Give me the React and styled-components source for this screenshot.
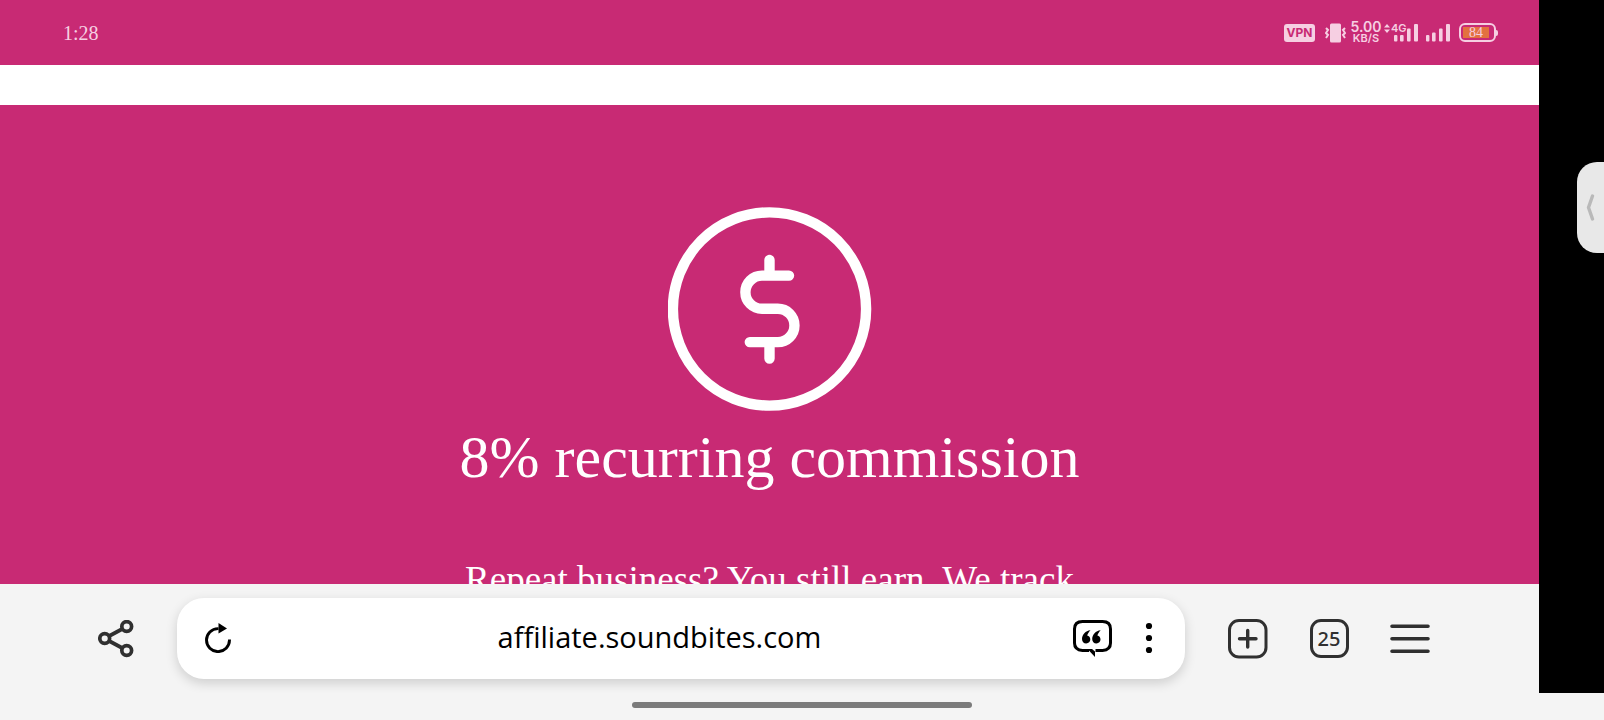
import React from "react";
import styled, { createGlobalStyle } from "styled-components";

const GlobalStyle = createGlobalStyle`
  *, *::before, *::after { box-sizing: border-box; }
  body {
    margin: 0;
    background: #f4f4f4;
    font-family: "Noto Sans", "Liberation Sans", sans-serif;
  }
  svg { display: block; }
`;

const PINK = "#c82a74";
const TINT = "#f6cfe2";
const INK = "#303030";
const SERIF = '"Liberation Serif", serif';

const Screen = styled.div`
  display: flex;
  flex-direction: column;
  height: 100vh;
  overflow: hidden;
`;

const Stage = styled.div`
  display: flex;
  flex: 1;
  min-height: 0;
`;

const Browser = styled.div`
  display: flex;
  flex-direction: column;
  flex: 1;
  min-width: 0;
`;

const StatusBar = styled.header`
  display: flex;
  align-items: center;
  justify-content: space-between;
  height: 65px;
  padding: 0 41px 0 63px;
  background: ${PINK};
  color: ${TINT};
`;

const Clock = styled.time`
  font: 20px/24px ${SERIF};
`;

const StatusIcons = styled.div`
  display: flex;
  align-items: center;
`;

const VpnBadge = styled.span`
  width: 31px;
  margin-right: 10px;
  border-radius: 3px;
  background: ${TINT};
  color: ${PINK};
  font: 700 12px/18px Inter, sans-serif;
  text-align: center;
`;

const Speed = styled.div`
  display: flex;
  flex-direction: column;
  align-items: center;
  width: 32px;
  margin: 0 2px 0 4px;
  font: 600 11px/11px Inter, sans-serif;
`;

const SpeedValue = styled.span`
  font-size: 14px;
  line-height: 12px;
`;

const Network = styled.div`
  position: relative;
  margin-right: 8px;
`;

const NetworkLabel = styled.span`
  position: absolute;
  top: -2px;
  left: 7px;
  font: 600 11px/12px Inter, sans-serif;
`;

const Battery = styled.div`
  display: flex;
  align-items: center;
  margin-left: 9px;
`;

const BatteryBody = styled.div`
  width: 37px;
  padding: 2px;
  border: 2px solid ${TINT};
  border-radius: 6px;
`;

const BatteryLevel = styled.div`
  width: 26px;
  background: #e3713f;
  font: 14px/11px ${SERIF};
  text-align: center;
`;

const BatteryTip = styled.div`
  width: 2px;
  height: 6px;
  background: ${TINT};
  border-radius: 0 2px 2px 0;
`;

const Page = styled.main`
  display: flex;
  flex-direction: column;
  flex: 1;
  min-height: 0;
  padding-top: 40px;
  background: #fff;
`;

const Feature = styled.section`
  display: flex;
  flex-direction: column;
  align-items: center;
  flex: 1;
  min-height: 0;
  padding-top: 102px;
  overflow: hidden;
  background: ${PINK};
  color: #fff;
  font-family: ${SERIF};
  text-align: center;

  > svg { flex: none; }
`;

const Title = styled.h2`
  margin: 10px 0 0;
  font-size: 60px;
  font-weight: 400;
  line-height: 72px;
`;

const Copy = styled.p`
  margin: 65px 0 0;
  font-size: 37px;
  line-height: 44px;
`;

const Toolbar = styled.nav`
  display: flex;
  align-items: center;
  height: 109px;
  padding: 0 109px 0 98px;
  background: #f4f4f4;
  color: ${INK};
`;

const AddressBar = styled.form`
  display: flex;
  align-items: center;
  flex: 1;
  min-width: 0;
  height: 81px;
  margin: 0 43px;
  padding: 0 28px 2px 26px;
  border-radius: 27px;
  background: #fff;
  color: #000;
  box-shadow: 0 4px 12px rgba(0, 0, 0, 0.16);
`;

const Address = styled.input`
  flex: 1;
  min-width: 0;
  height: 44px;
  padding: 0 0 2px 14px;
  border: 0;
  outline: 0;
  background: none;
  color: inherit;
  font: 29px/42px "Open Sans", "Noto Sans", sans-serif;
  text-align: center;
`;

const IconButton = styled.button`
  display: flex;
  align-items: center;
  justify-content: center;
  flex: none;
  width: ${(p) => p.$width || 40}px;
  height: 40px;
  padding: 0;
  border: 0;
  background: none;
  color: inherit;
`;

const Tools = styled.div`
  display: flex;
  gap: 41px;
`;

const AddressTools = styled.div`
  display: flex;
  gap: 29px;
`;

const TabCount = styled.span`
  width: 39px;
  height: 39px;
  border: 3px solid ${INK};
  border-radius: 11px;
  font: 500 20px/33px "Noto Sans", sans-serif;
  text-align: center;
`;

const Gutter = styled.aside`
  width: 65px;
  padding-top: 162px;
  background: #000;
`;

const EdgeHandle = styled.button`
  display: flex;
  align-items: center;
  width: 27px;
  height: 91px;
  margin-left: auto;
  padding: 0 0 0 9px;
  border: 0;
  border-radius: 20px 0 0 20px;
  background: #e8e8e8;
`;

const GestureBar = styled.footer`
  display: flex;
  justify-content: center;
  height: 27px;
  padding-top: 9px;
  background: #f4f4f4;
`;

const GesturePill = styled.div`
  width: 340px;
  height: 6px;
  border-radius: 3px;
  background: #7b7b7b;
`;

const VibrateIcon = () => (
  <svg width="21" height="20" viewBox="0 0 21 20" fill="none" stroke={TINT} strokeWidth="2">
    <rect x="5" y="0.5" width="11" height="19" rx="1.5" fill={TINT} stroke="none" />
    <path d="M1 5l2 2-2 3 2 2-2 3M20 5l-2 2 2 3-2 2 2 3" />
  </svg>
);

const SignalIcon = () => (
  <svg width="24" height="18" viewBox="0 0 24 18" fill={TINT}>
    <rect x="0" y="11" width="3.4" height="6.5" rx="1" />
    <rect x="6" y="8.500" width="3.6" height="9" rx="1" />
    <rect x="13" y="4.500" width="3.6" height="13" rx="1" />
    <rect x="20" y="0" width="4" height="17.500" rx="1" />
  </svg>
);

const NetworkSignalIcon = () => (
  <svg width="34" height="18" viewBox="0 0 34 18" fill={TINT}>
    <path d="M0 3.500l3-3.500 3 3.500zM0 5.500h6l-3 3.500z" />
    <rect x="10" y="11" width="3.4" height="6.5" rx="1" />
    <rect x="16" y="11" width="3.6" height="6.5" rx="1" />
    <rect x="23" y="4.500" width="3.6" height="13" rx="1" />
    <rect x="30" y="0" width="4" height="17.500" rx="1" />
  </svg>
);

const DollarIcon = () => (
  <svg width="204" height="204" viewBox="0 0 204 204" fill="none" stroke="#fff" strokeWidth="10.4" strokeLinecap="round">
    <circle cx="101.5" cy="102" r="96.6" />
    <path d="M101.500 53v12M101.500 139v12.500M121 68.600H94a16.600 16.600 0 0 0 0 33.200h15.800a16.600 16.600 0 0 1 0 33.300H81.800" />
  </svg>
);

const ShareIcon = () => (
  <svg width="36" height="38" viewBox="0 0 36 38" fill="none" stroke="currentColor" strokeWidth="3.700">
    <circle cx="6.700" cy="18.500" r="4.900" />
    <circle cx="28.700" cy="6.500" r="4.900" />
    <circle cx="28.700" cy="30.500" r="4.900" />
    <path d="M11.200 16l13-7M11.200 21l13 7" />
  </svg>
);

const ReloadIcon = () => (
  <svg width="30" height="30" viewBox="0 0 30 30" fill="none" stroke="currentColor" strokeWidth="2.900">
    <path d="M15.500 5.600H15a11.500 11.500 0 1 0 11.500 11.500v-.700" />
    <path d="M15.500 0v10.500L24 5.600z" fill="currentColor" stroke="none" />
  </svg>
);

const QuoteIcon = () => (
  <svg width="40" height="40" viewBox="0 0 40 40" fill="none" stroke="currentColor" strokeWidth="3">
    <path d="M23.500 32.500h7q8-.500 8-7.500V11q0-7.500-8-7.500h-20q-8 0-8 7.500v14q0 7 8 7.500H17" />
    <path d="M15.500 31h4.500l3 2.500V39z" fill="currentColor" stroke="none" />
    <path
      d="M18.500 12.200c-5 .500-8.500 4.500-8.500 8.800 0 2.700 1.700 4.500 4.200 4.500 2.400 0 4.100-1.700 4.100-3.900 0-2.100-1.300-3.600-3.100-4 .400-2 1.600-3.500 3.300-5.400zM28.700 12.200c-5 .500-8.500 4.500-8.500 8.800 0 2.700 1.700 4.500 4.200 4.500 2.400 0 4.100-1.700 4.100-3.900 0-2.100-1.300-3.600-3.100-4 .400-2 1.600-3.500 3.300-5.400z"
      fill="currentColor"
      stroke="none"
    />
  </svg>
);

const MoreIcon = () => (
  <svg width="16" height="32" viewBox="0 0 16 32" fill="currentColor">
    <circle cx="8" cy="4" r="3.100" />
    <circle cx="8" cy="16" r="3.100" />
    <circle cx="8" cy="28" r="3.100" />
  </svg>
);

const NewTabIcon = () => (
  <svg width="40" height="40" viewBox="0 0 40 40" fill="none" stroke="currentColor" strokeWidth="3" strokeLinecap="round">
    <rect x="1.500" y="1.500" width="36.500" height="36.500" rx="9.500" />
    <path d="M19.700 11.500v16.500M11.500 19.700h16.500" strokeWidth="3.400" />
  </svg>
);

const MenuIcon = () => (
  <svg width="40" height="30" viewBox="0 0 40 30" fill="none" stroke="currentColor" strokeWidth="3.600" strokeLinecap="round">
    <path d="M2 2.300h36M2 14.700h36M2 27.200h36" />
  </svg>
);

const ChevronIcon = () => (
  <svg width="9" height="28" viewBox="0 0 9 28" fill="none" stroke="#b9b9b9" strokeWidth="3.400" strokeLinecap="round" strokeLinejoin="round">
    <path d="M6.500 2L2.500 13.500l4 11.500" />
  </svg>
);

export default function App() {
  return (
    <Screen>
      <GlobalStyle />
      <Stage>
        <Browser>
          <StatusBar>
            <Clock>1:28</Clock>
            <StatusIcons>
              <VpnBadge>VPN</VpnBadge>
              <VibrateIcon />
              <Speed>
                <SpeedValue>5.00</SpeedValue>
                <span>KB/S</span>
              </Speed>
              <Network>
                <NetworkSignalIcon />
                <NetworkLabel>4G</NetworkLabel>
              </Network>
              <SignalIcon />
              <Battery>
                <BatteryBody>
                  <BatteryLevel>84</BatteryLevel>
                </BatteryBody>
                <BatteryTip />
              </Battery>
            </StatusIcons>
          </StatusBar>

          <Page>
            <Feature>
              <DollarIcon />
              <Title>8% recurring commission</Title>
              <Copy>Repeat business? You still earn. We track</Copy>
            </Feature>
          </Page>

          <Toolbar aria-label="Browser">
            <IconButton type="button" aria-label="Share" $width={36}>
              <ShareIcon />
            </IconButton>
            <AddressBar onSubmit={(e) => e.preventDefault()}>
              <IconButton type="button" aria-label="Reload" $width={30}>
                <ReloadIcon />
              </IconButton>
              <Address type="text" aria-label="Address" spellCheck={false} defaultValue="affiliate.soundbites.com" />
              <AddressTools>
                <IconButton type="button" aria-label="Summarize">
                  <QuoteIcon />
                </IconButton>
                <IconButton type="button" aria-label="More" $width={16}>
                  <MoreIcon />
                </IconButton>
              </AddressTools>
            </AddressBar>
            <Tools>
              <IconButton type="button" aria-label="New tab">
                <NewTabIcon />
              </IconButton>
              <IconButton type="button" aria-label="Open tabs">
                <TabCount>25</TabCount>
              </IconButton>
              <IconButton type="button" aria-label="Menu">
                <MenuIcon />
              </IconButton>
            </Tools>
          </Toolbar>
        </Browser>
        <Gutter>
          <EdgeHandle type="button" aria-label="Open side panel">
            <ChevronIcon />
          </EdgeHandle>
        </Gutter>
      </Stage>
      <GestureBar>
        <GesturePill />
      </GestureBar>
    </Screen>
  );
}
